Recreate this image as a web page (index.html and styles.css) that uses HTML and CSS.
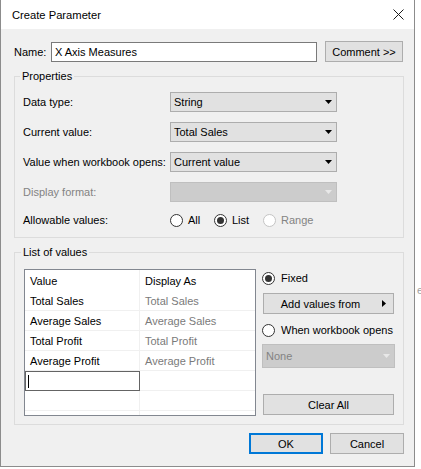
FILE: index.html
```html
<!DOCTYPE html>
<html>
<head>
  <title>Create Parameter</title>
  <link rel="stylesheet" href="styles.css">
</head>
<body>
  <div class="page">
    <div class="dialog">
      <div class="titlebar">
        <span>Create Parameter</span>
        <svg class="close" width="11" height="11" viewBox="0 0 11 11">
          <path d="M0.5 0.5 L10.5 10.5 M10.5 0.5 L0.5 10.5" stroke="#1a1a1a" stroke-width="1" fill="none"/>
        </svg>
      </div>

      <div class="content">
        <div class="name-row">
          <span class="name-label">Name:</span>
          <div class="textbox">X Axis Measures</div>
          <div class="btn comment">Comment &gt;&gt;</div>
        </div>

        <fieldset class="group props">
          <legend>Properties</legend>
          <div class="form-grid">
            <span>Data type:</span>
            <div class="combo"><span>String</span><svg class="arrow" width="7" height="4" viewBox="0 0 7 4"><path d="M0 0 H7 L3.5 4 Z"/></svg></div>

            <span>Current value:</span>
            <div class="combo"><span>Total Sales</span><svg class="arrow" width="7" height="4" viewBox="0 0 7 4"><path d="M0 0 H7 L3.5 4 Z"/></svg></div>

            <span>Value when workbook opens:</span>
            <div class="combo"><span>Current value</span><svg class="arrow" width="7" height="4" viewBox="0 0 7 4"><path d="M0 0 H7 L3.5 4 Z"/></svg></div>

            <span class="disabled-text">Display format:</span>
            <div class="combo disabled"><span></span><svg class="arrow" width="7" height="4" viewBox="0 0 7 4"><path d="M0 0 H7 L3.5 4 Z"/></svg></div>

            <span class="last">Allowable values:</span>
            <div class="radios last">
              <span class="radio r-all"><i class="dot"></i>All</span>
              <span class="radio r-list"><i class="dot checked"></i>List</span>
              <span class="radio r-range disabled-text"><i class="dot off"></i>Range</span>
            </div>
          </div>
        </fieldset>

        <fieldset class="group values-group">
          <legend>List of values</legend>
          <div class="values-body">
            <div class="values">
              <div class="vrow head"><div class="cell">Value</div><div class="cell">Display As</div></div>
              <div class="vrow"><div class="cell">Total Sales</div><div class="cell alias">Total Sales</div></div>
              <div class="vrow"><div class="cell">Average Sales</div><div class="cell alias">Average Sales</div></div>
              <div class="vrow"><div class="cell">Total Profit</div><div class="cell alias">Total Profit</div></div>
              <div class="vrow"><div class="cell">Average Profit</div><div class="cell alias">Average Profit</div></div>
              <div class="vrow"><div class="cell editing"><i class="caret"></i></div><div class="cell"></div></div>
              <div class="vrow"><div class="cell"></div><div class="cell"></div></div>
              <div class="vrow filler"><div class="cell"></div><div class="cell"></div></div>
            </div>

            <div class="side">
              <span class="radio fixed"><i class="dot checked"></i>Fixed</span>
              <div class="btn add-values">
                <span>Add values from</span>
                <svg class="side-arrow" width="4" height="7" viewBox="0 0 4 7"><path d="M0 0 L4 3.5 L0 7 Z"/></svg>
              </div>
              <span class="radio when-opens"><i class="dot"></i>When workbook opens</span>
              <div class="combo disabled none"><span>None</span><svg class="arrow" width="7" height="4" viewBox="0 0 7 4"><path d="M0 0 H7 L3.5 4 Z"/></svg></div>
              <div class="btn clear-all">Clear All</div>
            </div>
          </div>
        </fieldset>

        <div class="actions">
          <div class="btn ok">OK</div>
          <div class="btn cancel">Cancel</div>
        </div>
      </div>
    </div>
    <div class="behind">e</div>
  </div>
</body>
</html>
```

FILE: styles.css
```css
body { margin: 0; background: #fff; font-family: "Liberation Sans", Arial, sans-serif; font-size: 11px; color: #000; white-space: nowrap; }
.page { display: flex; }
.behind { color: #a0a0a0; padding-top: 284px; margin-left: 2px; }

.dialog { flex: none; width: 413px; height: 466px; background: #f0f0f0; border: 1px solid #8c8c8c; border-top: none; }

.titlebar { height: 29px; background: #fff; display: flex; align-items: center; justify-content: space-between; padding: 0 10px 0 11px; font-size: 11.2px; }
.close { display: block; }

.content { padding: 12px 9px 0 13px; }

.name-row { display: flex; align-items: center; height: 21px; }
.name-label { width: 37px; }
.textbox { box-sizing: border-box; width: 266px; height: 20px; line-height: 18px; padding-left: 3px; background: #fff; border: 1px solid #7a7a7a; }
.btn { box-sizing: border-box; height: 21px; background: #e1e1e1; border: 1px solid #adadad; display: flex; align-items: center; justify-content: center; }
.comment { margin-left: 8px; width: 78px; }

.group { box-sizing: border-box; width: 390px; margin: 6px 0 0; border: 1px solid #dcdcdc; min-width: 0; }
.group legend { line-height: 16px; padding: 0 2px; margin-left: -3px; }

.props { padding: 8px 8px 9px 8px; }
.form-grid { display: grid; grid-template-columns: 147px 167px; grid-template-rows: 20px 20px 20px 20px 16px; row-gap: 10px; align-items: center; }

.combo { box-sizing: border-box; height: 20px; background: #e1e1e1; border: 1px solid #adadad; display: flex; align-items: center; justify-content: space-between; padding: 0 4px 0 3px; }
.combo .arrow { display: block; fill: #000; }
.combo.disabled { background: #cccccc; border-color: #bfbfbf; color: #838383; }
.combo.disabled .arrow { fill: #e8e8e8; }
.disabled-text { color: #838383; }

.radios { display: flex; align-items: center; }
.radio { display: flex; align-items: center; }
.dot { box-sizing: border-box; width: 13px; height: 13px; border: 1px solid #333; border-radius: 50%; background: #fff; margin-right: 5px; display: flex; align-items: center; justify-content: center; }
.dot.checked::after { content: ""; width: 7px; height: 7px; border-radius: 50%; background: #333; }
.dot.off { border-color: #c4c4c4; }
.r-all { width: 44px; }
.r-list { width: 49px; }

.values-group { padding: 9px 8px 8px 9px; }
.values-body { display: flex; }
.values { box-sizing: border-box; width: 232px; height: 147px; background: #fff; border: 1px solid #828790; display: flex; flex-direction: column; }
.vrow { display: flex; box-sizing: border-box; height: 20px; border-bottom: 1px solid #f0f0f0; flex: none; }
.vrow.head { height: 21px; border-bottom: none; }
.vrow.filler { flex: 1; border-bottom: none; }
.cell { display: flex; align-items: center; padding-left: 5px; }
.cell:first-child { box-sizing: border-box; width: 115px; border-right: 1px solid #f0f0f0; }
.cell:last-child { flex: 1; }
.alias { color: #7a7a7a; }
.cell.editing { border: 1px solid #646464; margin-bottom: -1px; padding-left: 2px; }
.caret { width: 1px; height: 13px; background: #000; }

.side { box-sizing: border-box; width: 133px; margin-left: 6px; display: flex; flex-direction: column; }
.side .fixed { height: 18px; }
.side .fixed .dot { margin-right: 6px; }
.side .when-opens .dot { margin-right: 6px; }
.side .add-values { margin: 6px 1px 0; position: relative; padding-right: 16px; }
.side-arrow { position: absolute; right: 7px; top: 6px; fill: #000; }
.side .when-opens { height: 16px; margin-top: 8px; }
.side .none { height: 24px; margin-top: 6px; }
.side .clear-all { margin: 26px 1px 0; }

.actions { display: flex; justify-content: flex-end; margin-top: 8px; padding-right: 1px; }
.actions .btn { width: 74px; }
.ok { border: 2px solid #0078d7; }
.cancel { margin-left: 7px; }
```
